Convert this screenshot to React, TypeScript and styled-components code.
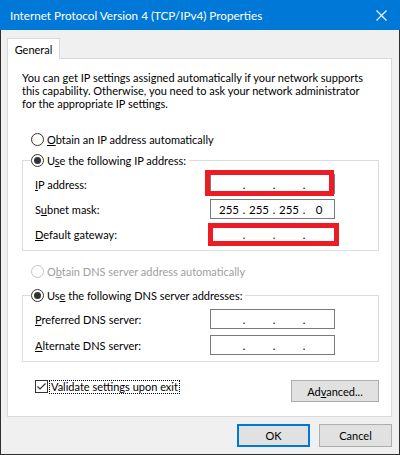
import React from 'react';
import styled, { createGlobalStyle } from 'styled-components';

const GlobalStyle = createGlobalStyle`
  html, body {
    margin: 0;
    padding: 0;
    background: #f0f0f0;
  }
  body {
    font-family: Lato, "Liberation Sans", sans-serif;
    font-size: 11px;
    color: #000;
  }
`;

const Window = styled.div`
  width: 400px;
  height: 455px;
  display: flex;
  flex-direction: column;
  box-sizing: border-box;
  background: #f0f0f0;
`;

const TitleBar = styled.div`
  height: 30px;
  flex: none;
  display: flex;
  align-items: center;
  justify-content: space-between;
  background: #0078d7;
  color: #fff;
  padding-left: 10px;
  font-size: 11.7px;
`;

const CloseButton = styled.div`
  width: 36px;
  height: 30px;
  margin-right: 1px;
  display: flex;
  align-items: center;
  justify-content: center;
`;

const Body = styled.div`
  flex: 1;
  display: flex;
  flex-direction: column;
  border: 1px solid #2e2e2e;
  border-top: none;
  padding: 8px 7px 7px 6px;
`;

const TabStrip = styled.div`
  display: flex;
  position: relative;
  z-index: 1;
  margin-bottom: -1px;
`;

const Tab = styled.div`
  width: 51px;
  height: 20px;
  display: flex;
  align-items: center;
  justify-content: center;
  background: #fff;
  border: 1px solid #d9d9d9;
  border-bottom: none;
`;

const Panel = styled.div`
  flex: 1;
  background: #fff;
  border: 1px solid #d9d9d9;
  padding: 12px 12px 0 14px;
  display: flex;
  flex-direction: column;
`;

const Intro = styled.p`
  margin: 0;
  line-height: 13px;
`;

const RadioRow = styled.label<{ $disabled?: boolean }>`
  display: flex;
  align-items: center;
  gap: 3px;
  height: 16px;
  margin-left: 9px;
  color: ${(p) => (p.$disabled ? '#a0a0a0' : '#000')};
  margin-top: ${(p) => (p.$disabled ? '12px' : '21px')};
`;

const RadioCircle = styled.span<{ $checked?: boolean; $disabled?: boolean }>`
  width: 11px;
  height: 11px;
  border-radius: 50%;
  border: 1px solid ${(p) => (p.$disabled ? '#c4c4c4' : '#333')};
  background: #fff;
  display: flex;
  align-items: center;
  justify-content: center;
  flex: none;

  &::after {
    content: '';
    display: ${(p) => (p.$checked ? 'block' : 'none')};
    width: 7px;
    height: 7px;
    border-radius: 50%;
    background: #333;
  }
`;

const Group = styled.fieldset<{ $top: number; $rowGap: number; $padTop: number }>`
  margin: ${(p) => p.$top}px 0 0 0;
  border: 1px solid #dcdcdc;
  padding: ${(p) => p.$padTop}px 43px 6px 12px;
  display: flex;
  flex-direction: column;
  gap: ${(p) => p.$rowGap}px;
  min-width: 0;
`;

const Legend = styled.legend`
  margin-left: -4px;
  padding: 0 3px 0 0;
  height: 16px;
  display: flex;
  align-items: center;
  gap: 3px;
`;

const FieldRow = styled.div`
  display: flex;
  align-items: center;
  justify-content: space-between;
  height: 20px;
`;

const AddressBox = styled.div`
  position: relative;
  width: 125px;
  height: 20px;
  box-sizing: border-box;
  border: 1px solid #7a7a7a;
  background: #fff;
  display: flex;
  align-items: center;
  padding-left: 5px;
`;

const Octet = styled.span`
  width: 26px;
  flex: none;
  text-align: center;
  font-size: 11.5px;
`;

const Dot = styled.span`
  width: 4px;
  flex: none;
  text-align: center;
`;

const RedMark = styled.span<{ $l: number; $t: number; $r: number; $b: number }>`
  position: absolute;
  left: ${(p) => p.$l}px;
  top: ${(p) => p.$t}px;
  right: ${(p) => p.$r}px;
  bottom: ${(p) => p.$b}px;
  border: 5px solid #ed1c24;
  pointer-events: none;
`;

const U = styled.span`
  text-decoration: underline;
  text-underline-offset: 1px;
`;

const BottomRow = styled.div`
  display: flex;
  justify-content: space-between;
  align-items: flex-start;
  margin-top: 18px;
`;

const CheckRow = styled.label`
  display: flex;
  align-items: center;
  gap: 2px;
  margin-left: 13px;
  height: 13px;
`;

const CheckBox = styled.span`
  width: 11px;
  height: 11px;
  border: 1px solid #333;
  background: #fff;
  display: flex;
  align-items: center;
  justify-content: center;
`;

const FocusText = styled.span`
  outline: 1px dotted #000;
  outline-offset: 0;
  padding: 0 1px;
  line-height: 12px;
`;

const Button = styled.button<{ $default?: boolean }>`
  font: inherit;
  color: #000;
  background: #e1e1e1;
  border: ${(p) => (p.$default ? '2px solid #0078d7' : '1px solid #adadad')};
  width: 73px;
  height: 23px;
  padding: 0;
  box-sizing: border-box;
`;

const AdvancedButton = styled(Button)`
  width: 88px;
  height: 22px;
`;

const Footer = styled.div`
  display: flex;
  justify-content: flex-end;
  gap: 9px;
  margin-top: 7px;
`;

type Mark = { l: number; t: number; r: number; b: number };

function Address({ values, mark }: { values?: string[]; mark?: Mark }) {
  const v = values ?? ['', '', '', ''];
  return (
    <AddressBox>
      <Octet>{v[0]}</Octet>
      <Dot>.</Dot>
      <Octet>{v[1]}</Octet>
      <Dot>.</Dot>
      <Octet>{v[2]}</Octet>
      <Dot>.</Dot>
      <Octet>{v[3]}</Octet>
      {mark && <RedMark $l={mark.l} $t={mark.t} $r={mark.r} $b={mark.b} />}
    </AddressBox>
  );
}

export default function App() {
  return (
    <>
      <GlobalStyle />
      <Window>
        <TitleBar>
          <span>Internet Protocol Version 4 (TCP/IPv4) Properties</span>
          <CloseButton>
            <svg width="11" height="11" viewBox="0 0 11 11">
              <path d="M0.5 0.5L10.5 10.5M10.5 0.5L0.5 10.5" stroke="#fff" strokeWidth="1.1" />
            </svg>
          </CloseButton>
        </TitleBar>
        <Body>
          <TabStrip>
            <Tab>General</Tab>
          </TabStrip>
          <Panel>
            <Intro>
              You can get IP settings assigned automatically if your network supports
              <br />
              this capability. Otherwise, you need to ask your network administrator
              <br />
              for the appropriate IP settings.
            </Intro>

            <RadioRow>
              <RadioCircle />
              <span>
                <U>O</U>btain an IP address automatically
              </span>
            </RadioRow>

            <Group $top={5} $rowGap={5} $padTop={6}>
              <Legend>
                <RadioCircle $checked />
                <span>
                  U<U>s</U>e the following IP address:
                </span>
              </Legend>
              <FieldRow>
                <span>
                  <U>I</U>P address:
                </span>
                <Address mark={{ l: -6, t: -5, r: 0, b: -3 }} />
              </FieldRow>
              <FieldRow>
                <span>
                  S<U>u</U>bnet mask:
                </span>
                <Address values={['255', '255', '255', '0']} />
              </FieldRow>
              <FieldRow>
                <span>
                  <U>D</U>efault gateway:
                </span>
                <Address mark={{ l: -3, t: -2, r: -5, b: -3 }} />
              </FieldRow>
            </Group>

            <RadioRow $disabled>
              <RadioCircle $disabled />
              <span>
                O<U>b</U>tain DNS server address automatically
              </span>
            </RadioRow>

            <Group $top={8} $rowGap={6} $padTop={6}>
              <Legend>
                <RadioCircle $checked />
                <span>
                  Us<U>e</U> the following DNS server addresses:
                </span>
              </Legend>
              <FieldRow>
                <span>
                  <U>P</U>referred DNS server:
                </span>
                <Address />
              </FieldRow>
              <FieldRow>
                <span>
                  <U>A</U>lternate DNS server:
                </span>
                <Address />
              </FieldRow>
            </Group>

            <BottomRow>
              <CheckRow>
                <CheckBox>
                  <svg width="11" height="11" viewBox="0 0 11 11">
                    <path d="M1.5 5.5L4 8L9.5 2.5" fill="none" stroke="#333" strokeWidth="1.2" />
                  </svg>
                </CheckBox>
                <FocusText>Validate settings upon exit</FocusText>
              </CheckRow>
              <AdvancedButton>
                Ad<U>v</U>anced...
              </AdvancedButton>
            </BottomRow>
          </Panel>
          <Footer>
            <Button $default>OK</Button>
            <Button>Cancel</Button>
          </Footer>
        </Body>
      </Window>
    </>
  );
}
